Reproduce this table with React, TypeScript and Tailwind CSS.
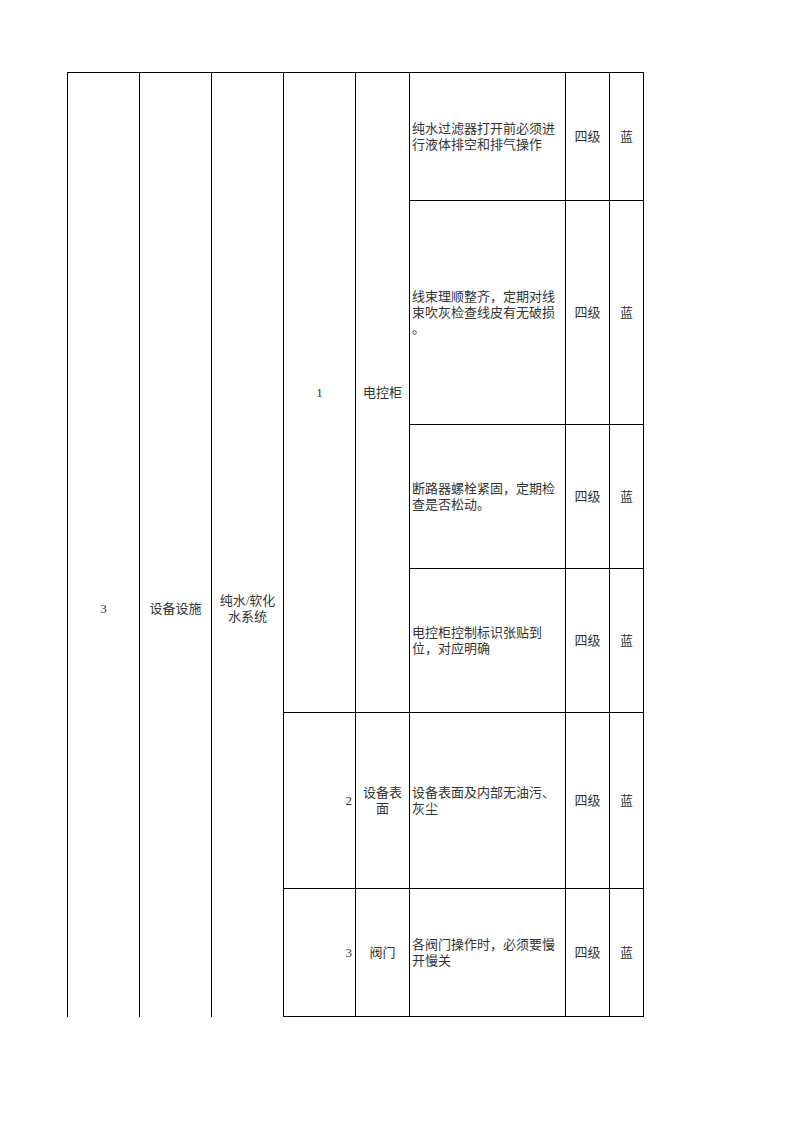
const font = { fontFamily: '"Liberation Serif", "Noto Sans CJK SC", serif' };

type Item = { lines: string[]; h: string };

const panelItems: Item[] = [
  { lines: ["纯水过滤器打开前必须进", "行液体排空和排气操作"], h: "h-[128px]" },
  { lines: ["线束理顺整齐，定期对线", "束吹灰检查线皮有无破损", "。"], h: "h-[224px]" },
  { lines: ["断路器螺栓紧固，定期检", "查是否松动。"], h: "h-[144px]" },
  { lines: ["电控柜控制标识张贴到", "位，对应明确"], h: "h-[144px]" },
];

const cell = "border border-black align-middle";

function Desc({ lines }: { lines: string[] }) {
  return (
    <td className={`${cell} px-[2px] text-left`}>
      {lines.map((l, i) => (
        <div key={i} className="whitespace-nowrap">
          {l}
        </div>
      ))}
    </td>
  );
}

function Level() {
  return (
    <>
      <td className={`${cell} text-center`}>四级</td>
      <td className={`${cell} text-center`}>蓝</td>
    </>
  );
}

export default function App() {
  return (
    <div className="min-h-[1122px] w-[793px] bg-white pl-[67px] pt-[72px] text-[13px] leading-[16px] text-[#333]" style={font}>
      <table className="table-fixed border-collapse">
        <colgroup>
          <col className="w-[72px]" />
          <col className="w-[72px]" />
          <col className="w-[72px]" />
          <col className="w-[72px]" />
          <col className="w-[54px]" />
          <col className="w-[156px]" />
          <col className="w-[44px]" />
          <col className="w-[34px]" />
        </colgroup>
        <tbody>
          {panelItems.map((item, i) => (
            <tr key={i} className={item.h}>
              {i === 0 && (
                <>
                  <td rowSpan={6} className="border-l border-t border-black pt-[528px] text-center align-top">
                    3
                  </td>
                  <td rowSpan={6} className="border-l border-t border-black pt-[528px] text-center align-top">
                    设备设施
                  </td>
                  <td rowSpan={6} className="border-l border-t border-black pt-[520px] text-center align-top">
                    纯水/软化
                    <br />
                    水系统
                  </td>
                  <td rowSpan={4} className={`${cell} text-center`}>
                    1
                  </td>
                  <td rowSpan={4} className={`${cell} text-center`}>
                    电控柜
                  </td>
                </>
              )}
              <Desc lines={item.lines} />
              <Level />
            </tr>
          ))}
          <tr className="h-[176px]">
            <td className={`${cell} pr-[3px] text-right`}>2</td>
            <td className={`${cell} text-center`}>
              设备表
              <br />面
            </td>
            <Desc lines={["设备表面及内部无油污、", "灰尘"]} />
            <Level />
          </tr>
          <tr className="h-[128px]">
            <td className={`${cell} pr-[3px] text-right`}>3</td>
            <td className={`${cell} text-center`}>阀门</td>
            <Desc lines={["各阀门操作时，必须要慢", "开慢关"]} />
            <Level />
          </tr>
        </tbody>
      </table>
    </div>
  );
}
